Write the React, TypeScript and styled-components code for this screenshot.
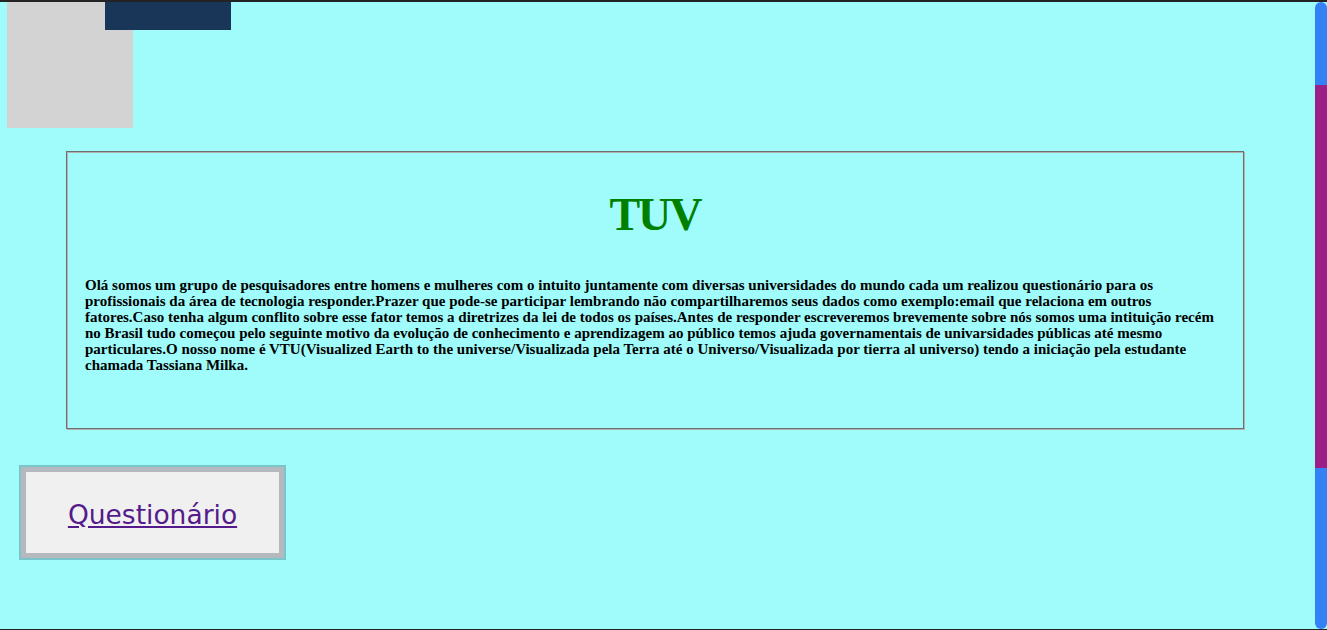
import React from "react";
import styled, { createGlobalStyle } from "styled-components";

const Global = createGlobalStyle`
  html, body { margin: 0; padding: 0; }
  body {
    background: #9ffcfb;
    font-family: "Liberation Serif", "Times New Roman", serif;
    overflow: hidden;
  }
`;

const Page = styled.div`
  height: 630px;
  box-sizing: border-box;
  border-top: 2px solid #232326;
  border-bottom: 1px solid #232326;
  display: flex;
  background: #9ffcfb;
`;

const Content = styled.main`
  flex: 1;
  display: flex;
  flex-direction: column;
  align-items: flex-start;
  min-width: 0;
`;

const Header = styled.header`
  position: relative;
  height: 126px;
  width: 100%;
`;

const Tile = styled.div`
  margin-left: 7px;
  width: 126px;
  height: 126px;
  background: #d3d3d3;
`;

const Banner = styled.div`
  position: absolute;
  top: 0;
  left: 105px;
  width: 126px;
  height: 28px;
  background: #193558;
`;

const Panel = styled.section`
  margin: 23px 0 0 66px;
  width: 1178px;
  height: 278px;
  box-sizing: border-box;
  border: 1px solid #6f6f6f;
  box-shadow: 1px 1px 0 #b2b2b2, inset 1px 1px 0 #b2b2b2;
  padding: 0 18px;
`;

const Title = styled.h1`
  margin: 35px 0 0;
  font-size: 46px;
  letter-spacing: -2px;
  font-weight: bold;
  line-height: 55px;
  color: #008000;
  text-align: center;
`;

const Text = styled.p`
  margin: 35px 0 0;
  font-size: 15px;
  line-height: 16px;
  font-weight: bold;
  color: #000;
`;

const LinkBox = styled.div`
  margin: 38px 0 0 21px;
  width: 253px;
  height: 81px;
  border: 5px solid #b5b8bd;
  box-shadow: 0 0 0 2px #7ac5ca;
  background: #f0f0f0;
  display: flex;
  align-items: center;
  justify-content: center;
`;

const Link = styled.a`
  font-family: "DejaVu Sans", sans-serif;
  font-size: 26.5px;
  color: #551a8b;
  text-decoration: underline;
  margin-top: 4px;
`;

const Rail = styled.div`
  width: 12px;
  display: flex;
  flex-direction: column;
  background: #3381f5;
  border-radius: 6px;
  overflow: hidden;
`;

const RailGap = styled.div<{ $h: number }>`
  height: ${(p) => p.$h}px;
`;

const Thumb = styled.div`
  height: 383px;
  background: #9b1f86;
`;

export default function App() {
  return (
    <>
      <Global />
      <Page>
        <Content>
          <Header>
            <Tile />
            <Banner />
          </Header>
          <Panel>
            <Title>TUV</Title>
            <Text>
              Olá somos um grupo de pesquisadores entre homens e mulheres com o intuito juntamente com diversas universidades do mundo cada um realizou questionário para os profissionais da área de tecnologia responder.Prazer que pode-se participar lembrando não compartilharemos seus dados como exemplo:email que relaciona em outros fatores.Caso tenha algum conflito sobre esse fator temos a diretrizes da lei de todos os países.Antes de responder escreveremos brevemente sobre nós somos uma intituição recém no Brasil tudo começou pelo seguinte motivo da evolução de conhecimento e aprendizagem ao público temos ajuda governamentais de univarsidades públicas até mesmo particulares.O nosso nome é VTU(Visualized Earth to the universe/Visualizada pela Terra até o Universo/Visualizada por tierra al universo) tendo a iniciação pela estudante chamada Tassiana Milka.
            </Text>
          </Panel>
          <LinkBox>
            <Link href="#">Questionário</Link>
          </LinkBox>
        </Content>
        <Rail>
          <RailGap $h={83} />
          <Thumb />
        </Rail>
      </Page>
    </>
  );
}
